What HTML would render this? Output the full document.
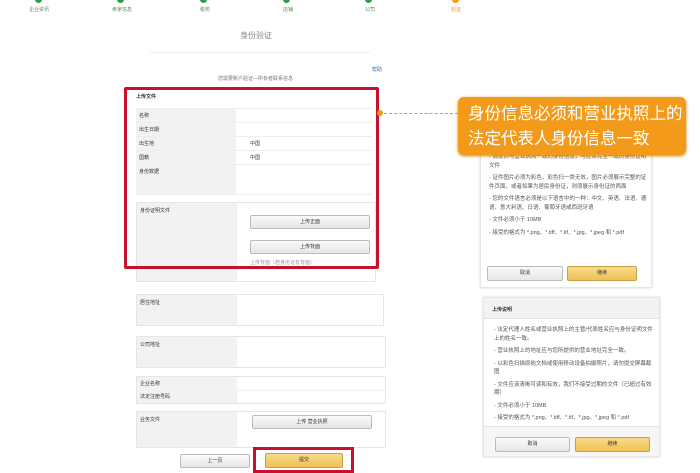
<!DOCTYPE html>
<html><head><meta charset="utf-8"><style>
*{margin:0;padding:0;box-sizing:border-box}
body{width:700px;height:470px;background:#fff;position:relative;overflow:hidden;font-family:"Liberation Sans","Noto Sans CJK SC",sans-serif;color:#333}
.a{position:absolute}
.t{font-size:5px;white-space:nowrap}
.dot{position:absolute;top:-4px;width:7px;height:7px;border-radius:50%;background:#2e9b47}
.lab{position:absolute;top:6px;font-size:5px;color:#5a8a5a;transform:translateX(-50%)}
.row{position:absolute;left:136px;width:236px;border-top:1px solid #eee}
.row .l{position:absolute;left:0;top:0;bottom:0;width:100px;background:#f2f2f2;font-size:5px;padding:3px 3px}
.row .v{position:absolute;left:114px;top:3px;font-size:5px}
.btn{position:absolute;border:1px solid #bbb;border-radius:2px;background:linear-gradient(#fafafa,#e6e6e6);font-size:5px;text-align:center}
.y{background:linear-gradient(#f8dc8a,#eec155);border-color:#c9a046}
.box{position:absolute;border:1px solid #e6e6e6;background:#fff}
.box .l{position:absolute;left:0;top:0;bottom:0;width:100px;background:#f2f2f2;font-size:5px;padding:4px 3px}
li{list-style:none;font-size:5.5px;line-height:8.5px;color:#555;margin-bottom:4px}
</style></head><body>
<div class="dot" style="left:35px"></div><div class="dot" style="left:117px"></div><div class="dot" style="left:200px"></div><div class="dot" style="left:283px"></div><div class="dot" style="left:365px"></div><div class="dot" style="left:452px;background:#f39a1b"></div>
<div class="lab" style="left:39px">企业资讯</div><div class="lab" style="left:122px">卖家信息</div><div class="lab" style="left:205px">税务</div><div class="lab" style="left:288px">店铺</div><div class="lab" style="left:370px">公司</div><div class="lab" style="left:456px;color:#f39a1b">验证</div>
<div class="a" style="left:240px;top:30px;font-size:8px;color:#888">身份验证</div>
<div class="a" style="left:150px;top:52px;width:220px;height:1px;background:#eee"></div>
<div class="a t" style="left:372px;top:66px;color:#3a6ea8">帮助</div>
<div class="a t" style="left:218px;top:75px;color:#777">您需要账户验证—所有者联系信息</div>

<div class="a t" style="left:136px;top:93px;font-weight:bold">上传文件</div>
<div class="row" style="top:108px;height:14px"><div class="l">名称</div></div>
<div class="row" style="top:122px;height:14px"><div class="l">出生日期</div></div>
<div class="row" style="top:136px;height:14px"><div class="l">出生地</div><div class="v">中国</div></div>
<div class="row" style="top:150px;height:14px"><div class="l">国籍</div><div class="v">中国</div></div>
<div class="row" style="top:164px;height:31px;border-bottom:1px solid #eee"><div class="l">身份数据</div></div>
<div class="box" style="left:136px;top:202px;width:240px;height:80px"><div class="l">身份证明文件</div></div>
<div class="btn" style="left:250px;top:215px;width:120px;height:14px;line-height:12px">上传正面</div>
<div class="btn" style="left:250px;top:240px;width:120px;height:14px;line-height:12px">上传背面</div>
<div class="a t" style="left:250px;top:259px;color:#999">上传背面（若身份证有背面）</div>
<div class="a" style="left:124px;top:87px;width:255px;height:182px;border:3px solid #c8102e;border-radius:2px"></div>

<div class="box" style="left:136px;top:294px;width:248px;height:32px"><div class="l">居住地址</div></div>
<div class="box" style="left:136px;top:336px;width:250px;height:32px"><div class="l">公司地址</div></div>
<div class="box" style="left:136px;top:376px;width:250px;height:28px"><div class="l" style="line-height:13px;padding-top:1px">企业名称<br>法定注册号码</div></div>
<div class="a" style="left:237px;top:390px;width:149px;height:1px;background:#eee"></div>
<div class="box" style="left:136px;top:411px;width:250px;height:37px"><div class="l">业务文件</div></div>
<div class="btn" style="left:252px;top:415px;width:120px;height:14px;line-height:12px">上传 营业执照</div>
<div class="btn" style="left:180px;top:454px;width:70px;height:14px;line-height:12px">上一页</div>
<div class="btn y" style="left:265px;top:453px;width:78px;height:15px;line-height:13px">提交</div>
<div class="a" style="left:253px;top:447px;width:101px;height:26px;border:3px solid #c8102e"></div>

<div class="a" style="left:377px;top:110px;width:6px;height:6px;border-radius:50%;background:#f39a1b"></div>
<div class="a" style="left:384px;top:113px;width:74px;border-top:1px dashed #f39a1b"></div>

<div class="box" style="left:480px;top:140px;width:172px;height:148px;box-shadow:0 0 3px #ddd">
<ul style="position:absolute;left:8px;top:12px;width:158px">
<li>- 请提供与营业执照一致的身份信息，与姓名完全一致的身份证明文件</li>
<li>- 证件图片必须为彩色，彩色扫一类无效，图片必须展示完整的证件页面，或者如果为居民身份证，则须展示身份证的两面</li>
<li>- 您的文件语言必须是以下语言中的一种：中文、英语、法语、德语、意大利语、日语、葡萄牙语或西班牙语</li>
<li>- 文件必须小于 10MB</li>
<li>- 接受的格式为 *.png、*.tiff、*.tif、*.jpg、*.jpeg 和 *.pdf</li>
</ul></div>
<div class="btn" style="left:487px;top:266px;width:76px;height:15px;line-height:13px">取消</div>
<div class="btn y" style="left:567px;top:266px;width:70px;height:15px;line-height:13px">继续</div>

<div class="a" style="left:458px;top:97px;width:228px;height:58px;background:#f39a1b;border-radius:6px;color:#fff;font-size:16.5px;line-height:25px;padding:3px 0 0 10px;font-family:'Noto Sans CJK SC',sans-serif;box-shadow:0 1px 3px #c80">身份信息必须和营业执照上的<br>法定代表人身份信息一致</div>

<div class="box" style="left:483px;top:297px;width:177px;height:160px;box-shadow:0 0 3px #ddd">
<div style="height:21px;background:#f3f3f3;border-bottom:1px solid #e4e4e4;font-size:5px;font-weight:bold;padding:8px 8px">上传说明</div>
<ul style="position:absolute;left:10px;top:28px;width:160px">
<li>- 法定代理人姓名或营业执照上的主管/代表姓名应与身份证明文件上的姓名一致。</li>
<li>- 营业执照上的地址应与您所提供的营业地址完全一致。</li>
<li>- 以彩色扫描原始文档或使用移动设备拍摄照片，请勿提交屏幕截图</li>
<li>- 文件应该清晰可读和有效，我们不接受过期的文件（已超过有效期）</li>
<li>- 文件必须小于 10MB</li>
<li>- 接受的格式为 *.png、*.tiff、*.tif、*.jpg、*.jpeg 和 *.pdf</li>
</ul>
<div style="position:absolute;left:0;right:0;top:128px;bottom:0;background:#f6f6f6;border-top:1px solid #e4e4e4"></div>
</div>
<div class="btn" style="left:495px;top:437px;width:75px;height:15px;line-height:13px">取消</div>
<div class="btn y" style="left:575px;top:437px;width:75px;height:15px;line-height:13px">继续</div>
</body></html>
